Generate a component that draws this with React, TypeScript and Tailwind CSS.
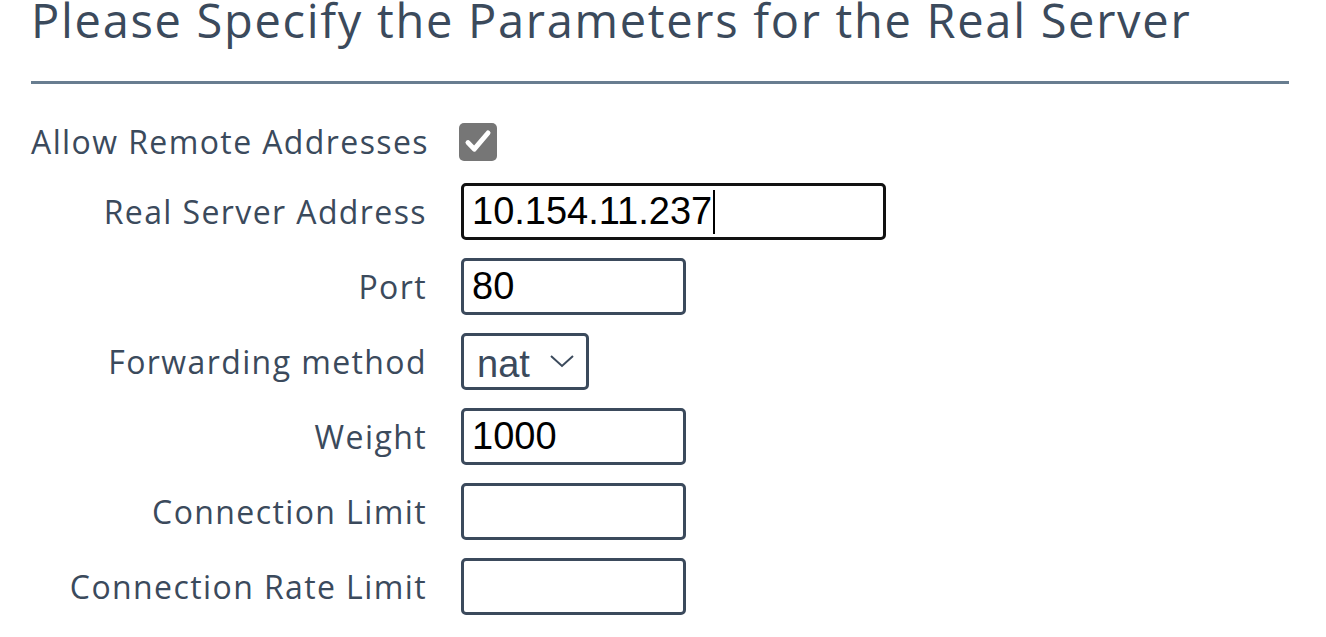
import { useState } from 'react';

const labelFont = { fontFamily: '"Open Sans", "Noto Sans", sans-serif' };

function Row({ label, children }: { label: string; children: React.ReactNode }) {
  return (
    <div className="flex items-center h-[57px]">
      <div className="w-[396px] text-right text-[32px] tracking-[1.4px] text-[#3b4a5c] whitespace-nowrap" style={labelFont}>
        {label}
      </div>
      <div className="ml-[34px] flex items-center">{children}</div>
    </div>
  );
}

export default function App() {
  const [port, setPort] = useState('80');
  const [weight, setWeight] = useState('1000');
  const [connLimit, setConnLimit] = useState('');
  const [rateLimit, setRateLimit] = useState('');
  const [method, setMethod] = useState('nat');

  const inputCls =
    'w-[225px] h-[57px] border-[3px] border-[#3b4a5c] rounded-[5px] px-[8px] text-[38px] text-black bg-white outline-none font-["Liberation_Sans",Arial,sans-serif]';

  return (
    <div className="w-[1326px] h-[637px] bg-white overflow-hidden pl-[31px] pr-[37px]">
      {/* Header */}
      <h1
        className="-mt-[6px] text-[47px] leading-[52px] tracking-[1.7px] text-[#3b4a5c] whitespace-nowrap"
        style={labelFont}
      >
        Please Specify the Parameters for the Real Server
      </h1>
      <div className="mt-[35px] h-[3px] bg-[#687d90]" />

      {/* Form */}
      <div className="mt-[34px] flex flex-col gap-[18px]">
        <div className="flex items-center h-[47px]">
          <div className="w-[396px] text-right text-[32px] tracking-[1.4px] text-[#3b4a5c] whitespace-nowrap" style={labelFont}>
            Allow Remote Addresses
          </div>
          <div className="ml-[32px] w-[38px] h-[38px] rounded-[5px] bg-[#767676] flex items-center justify-center">
            <svg width="30" height="30" viewBox="0 0 24 24" fill="none">
              <path d="M4 12.5l5 5.2L20 4.8" stroke="white" strokeWidth="4" strokeLinecap="round" strokeLinejoin="round" />
            </svg>
          </div>
        </div>

        <Row label="Real Server Address">
          <div className="w-[425px] h-[57px] border-[3px] border-[#111] rounded-[5px] px-[8px] flex items-center text-[38px] text-black font-['Liberation_Sans',Arial,sans-serif]">
            <span>10.154.11.237</span>
            <span className="ml-[1px] w-[2px] h-[44px] bg-black" />
          </div>
        </Row>

        <Row label="Port">
          <input className={inputCls} value={port} onChange={(e) => setPort(e.target.value)} />
        </Row>

        <Row label="Forwarding method">
          <div className="relative">
            <select
              value={method}
              onChange={(e) => setMethod(e.target.value)}
              className="appearance-none w-[128px] h-[57px] border-[3px] border-[#3b4a5c] rounded-[5px] pl-[13px] pr-[40px] text-[38px] text-[#3b4a5c] bg-white outline-none font-['Liberation_Sans',Arial,sans-serif]"
            >
              <option value="nat">nat</option>
              <option value="route">route</option>
              <option value="tunnel">tunnel</option>
            </select>
            <svg
              className="absolute right-[14px] top-[21px] pointer-events-none"
              width="26"
              height="15"
              viewBox="0 0 26 15"
              fill="none"
            >
              <path d="M2 2l11 10L24 2" stroke="#3b4a5c" strokeWidth="2" />
            </svg>
          </div>
        </Row>

        <Row label="Weight">
          <input className={inputCls} value={weight} onChange={(e) => setWeight(e.target.value)} />
        </Row>

        <Row label="Connection Limit">
          <input className={inputCls} value={connLimit} onChange={(e) => setConnLimit(e.target.value)} />
        </Row>

        <Row label="Connection Rate Limit">
          <input className={inputCls} value={rateLimit} onChange={(e) => setRateLimit(e.target.value)} />
        </Row>
      </div>
    </div>
  );
}
